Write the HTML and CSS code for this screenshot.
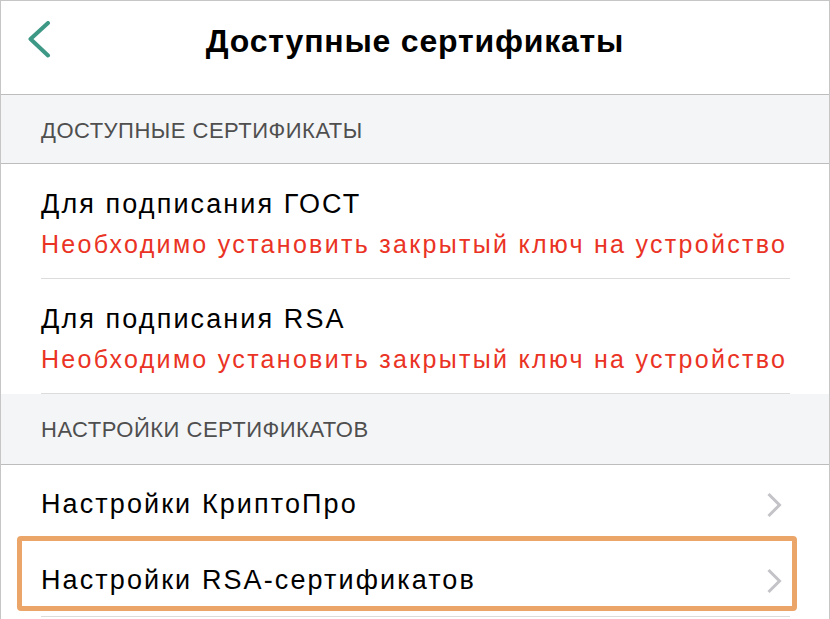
FILE: index.html
```html
<!DOCTYPE html>
<html lang="ru">
<head>
<meta charset="utf-8">
<title>Доступные сертификаты</title>
<link rel="stylesheet" href="styles.css">
</head>
<body>
<div class="screen">
  <header class="navbar">
    <svg class="back" width="24" height="40" viewBox="0 0 24 40" aria-label="Назад">
      <polyline points="21,2 3.5,18 21,34.5" fill="none" stroke="#3d9986" stroke-width="4" stroke-linecap="round" stroke-linejoin="round"/>
    </svg>
    <h1 class="title">Доступные сертификаты</h1>
    <span></span>
  </header>

  <div class="section">ДОСТУПНЫЕ СЕРТИФИКАТЫ</div>
  <div class="row">
    <div class="row-inner">
      <div class="row-title">Для подписания ГОСТ</div>
      <div class="row-error">Необходимо установить закрытый ключ на устройство</div>
    </div>
  </div>
  <div class="row">
    <div class="row-inner">
      <div class="row-title">Для подписания RSA</div>
      <div class="row-error">Необходимо установить закрытый ключ на устройство</div>
    </div>
  </div>

  <div class="section section--tall">НАСТРОЙКИ СЕРТИФИКАТОВ</div>
  <div class="row">
    <div class="row-inner nav">
      <div class="row-title">Настройки КриптоПро</div>
      <svg class="chev" width="16" height="26" viewBox="0 0 16 26"><polyline points="2.5,2 13.5,13 2.5,24" fill="none" stroke="#c4c4c8" stroke-width="3"/></svg>
    </div>
  </div>
  <div class="row">
    <div class="row-inner nav">
      <div class="row-title">Настройки RSA-сертификатов</div>
      <svg class="chev" width="16" height="26" viewBox="0 0 16 26"><polyline points="2.5,2 13.5,13 2.5,24" fill="none" stroke="#c4c4c8" stroke-width="3"/></svg>
    </div>
    <div class="highlight"></div>
  </div>
</div>
</body>
</html>
```

FILE: styles.css
```css
html, body {
  margin: 0;
  padding: 0;
  background: #ffffff;
}

body {
  font-family: "Liberation Sans", Arial, sans-serif;
  width: 830px;
  height: 619px;
  overflow: hidden;
}

.screen {
  width: 830px;
  height: 619px;
  box-sizing: border-box;
  border: 1px solid #c6c6c6;
  border-bottom: none;
  background: #ffffff;
  overflow: hidden;
}

.navbar {
  height: 94px;
  box-sizing: border-box;
  padding-top: 20px;
  border-bottom: 1px solid #bdbdbd;
  display: grid;
  grid-template-columns: 1fr auto 1fr;
  align-items: start;
}

.back {
  display: block;
  margin-left: 26px;
}

.title {
  margin: 0;
  font-size: 32px;
  line-height: 40px;
  font-weight: 700;
  letter-spacing: 0.8px;
  color: #000000;
}

.section {
  height: 69px;
  box-sizing: border-box;
  padding: 23px 0 0 40px;
  background: #f4f5f7;
  border-bottom: 1px solid #bdbdbd;
  font-size: 22px;
  line-height: 26px;
  color: #4f4f4f;
  letter-spacing: 0.5px;
}

.section--tall {
  height: 71px;
}

.row {
  position: relative;
  padding-left: 40px;
}

.row-inner {
  margin-right: 39px;
  padding: 25px 0 18px;
  border-bottom: 1px solid #dcdcdc;
}

.row-inner.nav {
  display: flex;
  justify-content: space-between;
  align-items: center;
  padding: 24px 0 20px;
}

.row-title {
  font-size: 27px;
  line-height: 31px;
  letter-spacing: 2.1px;
  color: #000000;
}

.row-error {
  margin-top: 9px;
  font-size: 25px;
  line-height: 31px;
  letter-spacing: 2.3px;
  color: #ea3324;
}

.chev {
  display: block;
  margin-right: 8px;
}

.highlight {
  position: absolute;
  left: 16px;
  top: -5px;
  width: 780px;
  height: 75px;
  box-sizing: border-box;
  border: 5px solid #eba568;
  border-radius: 4px;
  pointer-events: none;
}
```
